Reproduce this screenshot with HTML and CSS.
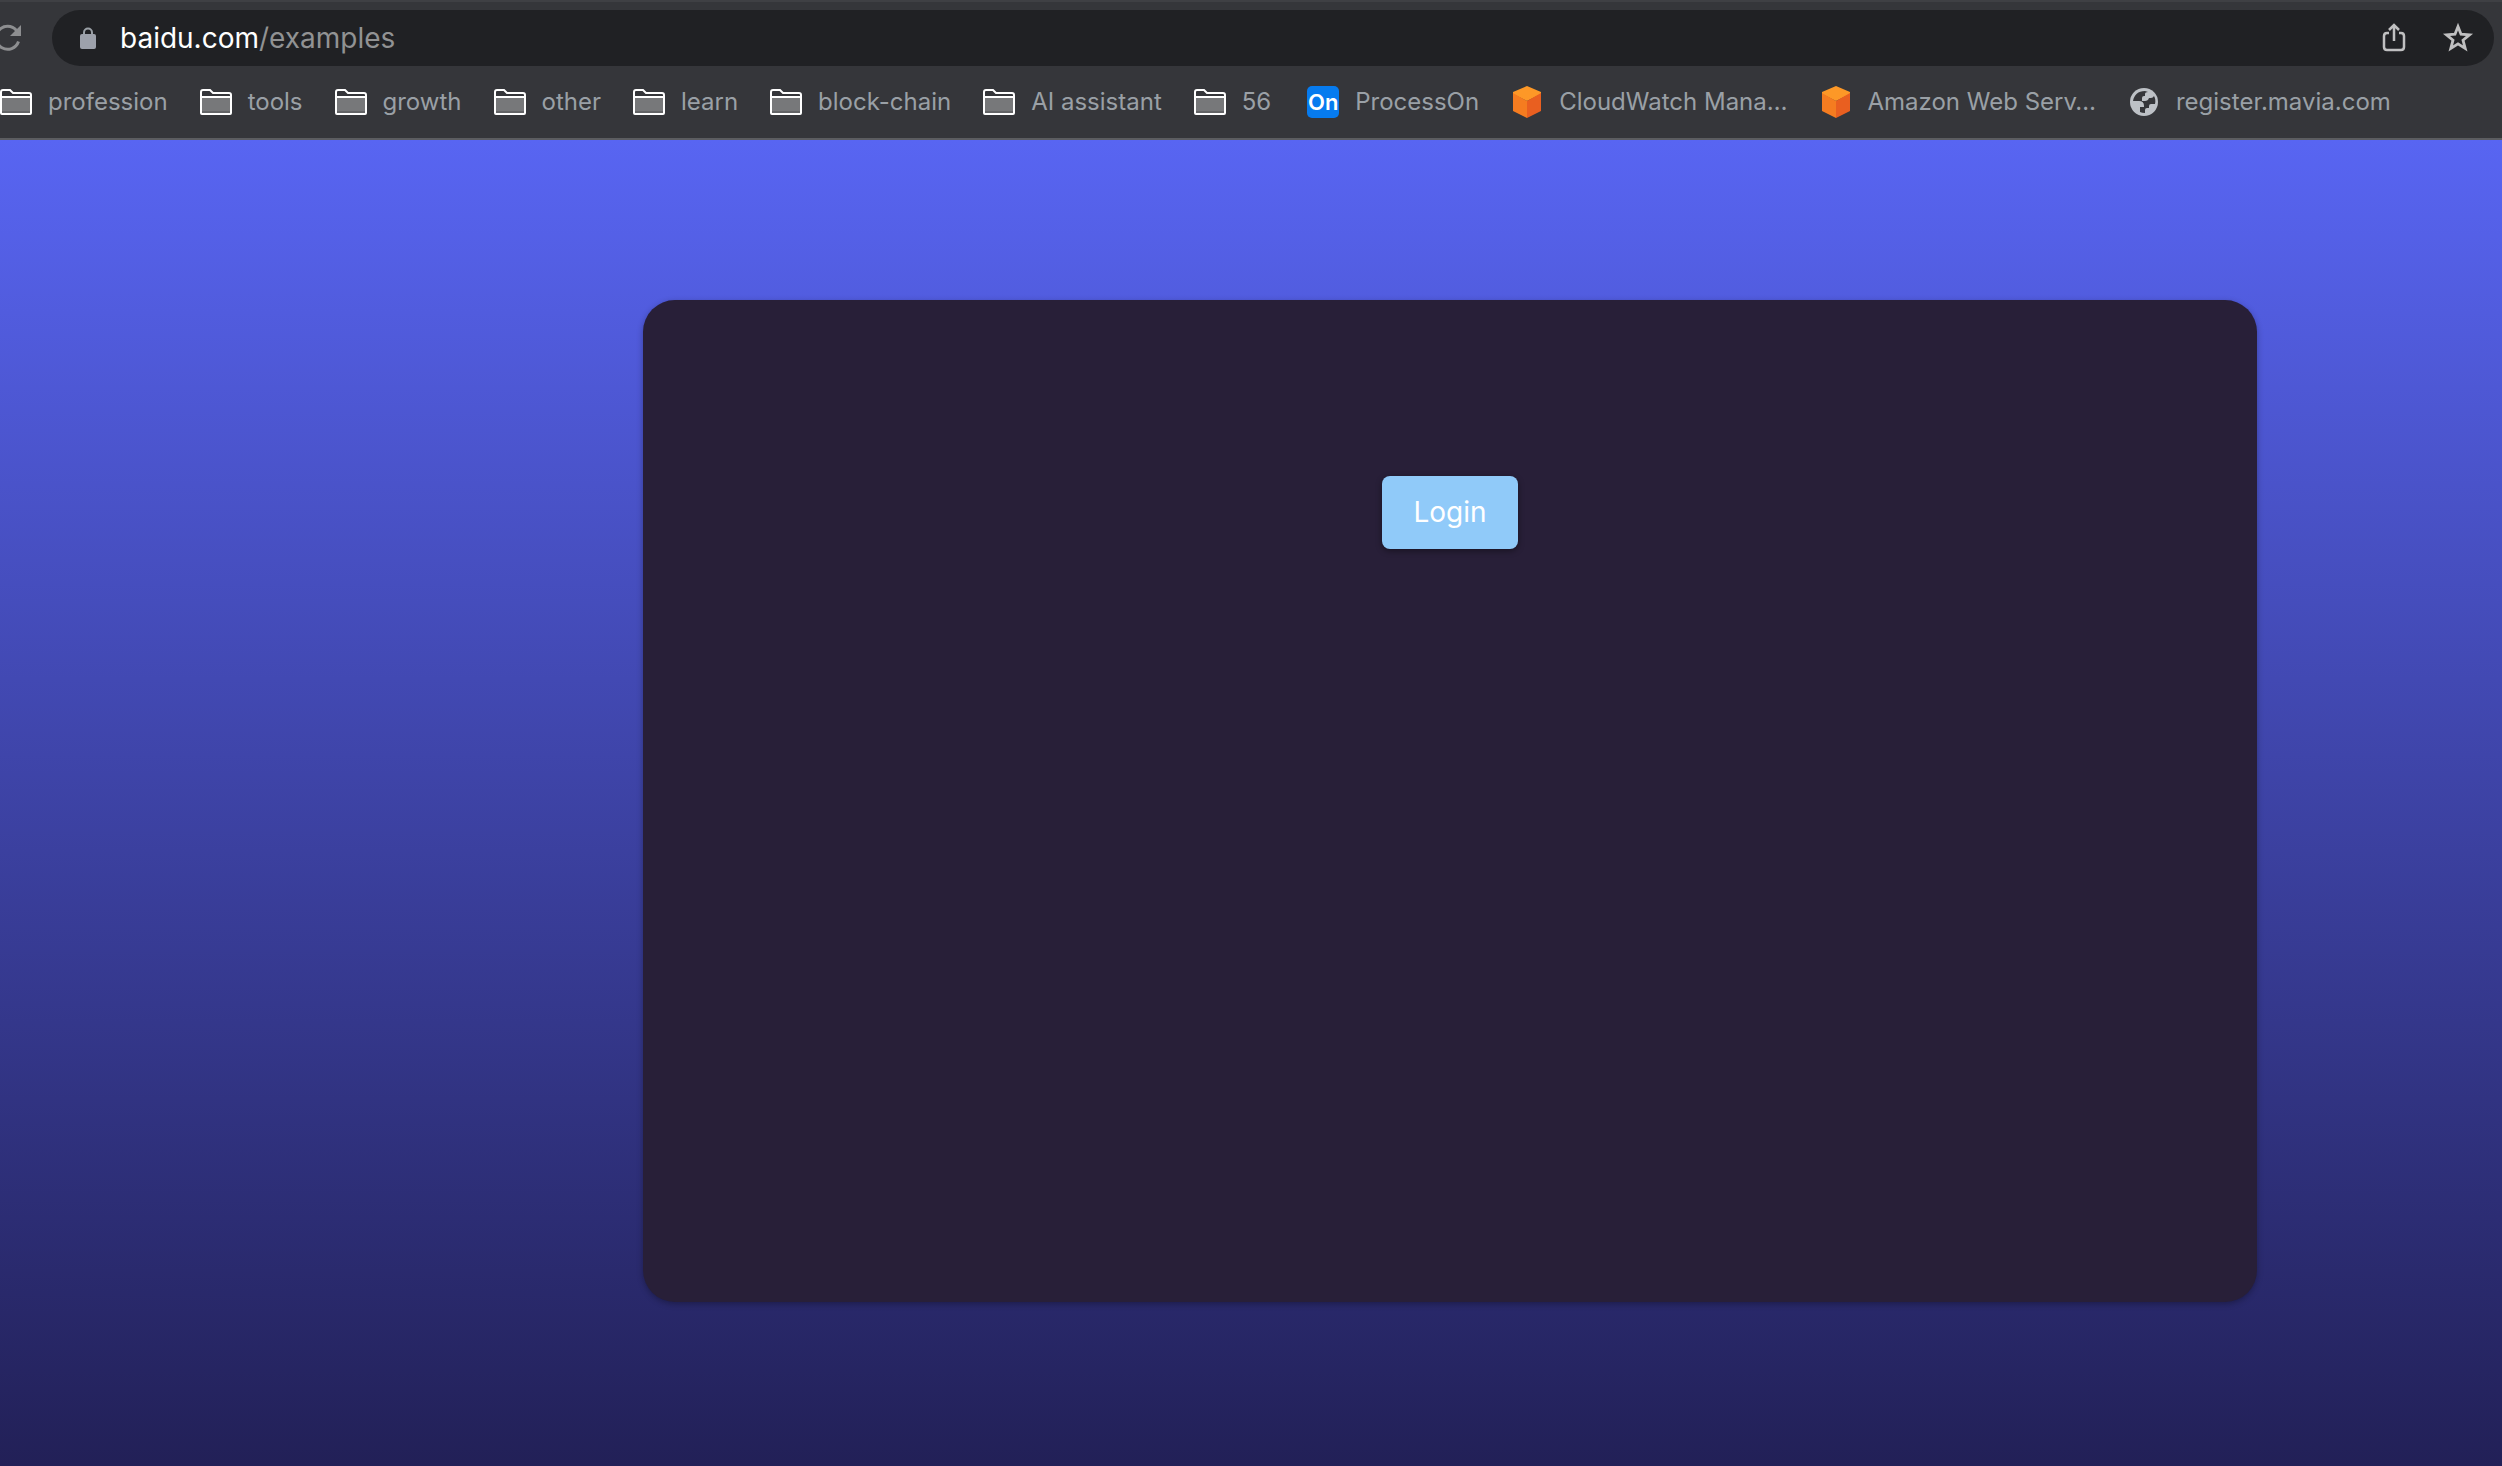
FILE: index.html
```html
<!DOCTYPE html>
<html lang="en">
<head>
<meta charset="utf-8">
<title>Examples</title>
<link rel="stylesheet" href="styles.css">
</head>
<body>
<svg class="sprite" aria-hidden="true">
  <symbol id="folder" viewBox="0 0 32 26">
    <path d="M2 9h28v15H2z" fill="#77787a"/>
    <path d="M2 22h28v2H2z" fill="#636466"/>
    <path d="M1 24V3q0-2 2-2h7l3 3h16q2 0 2 2v18q0 1-1 1H2q-1 0-1-1zM1 8h30" fill="none" stroke="#fff" stroke-width="2"/>
  </symbol>
  <symbol id="cube" viewBox="0 0 32 32">
    <path d="M16 0l14 6v2l-14 7L2 8V6z" fill="#fd9827"/>
    <path d="M2 7l14 8v17L2 25z" fill="#f57c20"/>
    <path d="M30 7l-14 8v17l14-7z" fill="#e95f20"/>
  </symbol>
</svg>
<header class="browser">
  <div class="toolbar">
    <button class="icon-button reload" aria-label="Reload">
      <svg width="32" height="32" viewBox="0 0 32 32"><path d="M26.500 19.500A11.500 11.500 0 1 1 24.500 8.500" fill="none" stroke="#8d8e90" stroke-width="3"/><path d="M29 3v11H18z" fill="#8d8e90"/></svg>
    </button>
    <div class="address">
      <svg width="16" height="22" viewBox="0 0 16 22"><path d="M4 9V5.500a4 4 0 0 1 8 0V9" fill="none" stroke="#9aa0a6" stroke-width="2"/><rect y="7" width="16" height="15" rx="2" fill="#9da1ab"/></svg>
      <p class="url"><span class="host">baidu.com</span>/examples</p>
      <button class="icon-button" aria-label="Share">
        <svg width="32" height="32" viewBox="0 0 32 32"><path d="M11 11H9q-3 0-3 3v11q0 3 3 3h14q3 0 3-3V14q0-3-3-3h-2M16 19V3M11 8l5-5 5 5" fill="none" stroke="#c0c0c1" stroke-width="2.500"/></svg>
      </button>
      <button class="icon-button" aria-label="Bookmark this page">
        <svg width="32" height="32" viewBox="0 0 32 32"><path d="M16 4.500l3 7.700 8.500.600-6.500 5.400 2.200 8.300-7.200-4.600-7.200 4.600 2.200-8.300-6.500-5.400 8.500-.600z" fill="none" stroke="#c0c0c1" stroke-width="2.800"/></svg>
      </button>
    </div>
  </div>
  <nav class="bookmarks" aria-label="Bookmarks">
    <div class="group">
      <a href="#"><svg class="folder"><use href="#folder"/></svg>profession</a>
      <a href="#"><svg class="folder"><use href="#folder"/></svg>tools</a>
      <a href="#"><svg class="folder"><use href="#folder"/></svg>growth</a>
      <a href="#"><svg class="folder"><use href="#folder"/></svg>other</a>
      <a href="#"><svg class="folder"><use href="#folder"/></svg>learn</a>
      <a href="#"><svg class="folder"><use href="#folder"/></svg>block-chain</a>
      <a href="#"><svg class="folder"><use href="#folder"/></svg>AI assistant</a>
      <a href="#"><svg class="folder"><use href="#folder"/></svg>56</a>
    </div>
    <div class="group">
      <a href="#"><span class="badge">On</span>ProcessOn</a>
      <a href="#"><svg class="favicon"><use href="#cube"/></svg>CloudWatch Mana…</a>
      <a href="#"><svg class="favicon"><use href="#cube"/></svg>Amazon Web Serv…</a>
      <a href="#"><svg class="favicon" viewBox="0 0 32 32"><circle cx="16" cy="16" r="14" fill="#bdc1c6"/><path d="M17 5C10 5 6 9 5 15h6q5 0 5 5v1h-4v5q2 1 5 1v-3q0-2 2-2h2v-2q0-2 2-2h4q1-5-1-8-1 2-3 2h-2q-1 3-4 3h-3v-3q0-2 2-2h1V8q0-2 3-2z" fill="#35363a"/></svg>register.mavia.com</a>
    </div>
  </nav>
</header>
<main class="page">
  <section class="card">
    <button class="login">Login</button>
  </section>
</main>
</body>
</html>
```

FILE: styles.css
```css
* {
  box-sizing: border-box;
}

body {
  display: flex;
  flex-direction: column;
  min-height: 100vh;
  margin: 0;
  font-family: Inter, "Liberation Sans", sans-serif;
}

.sprite {
  position: absolute;
  width: 0;
  height: 0;
}

.browser {
  background: #35363a;
  border-top: 2px solid #3f4044;
  border-bottom: 2px solid #5c5d60;
}

.toolbar {
  display: flex;
  align-items: center;
  gap: 28px;
  padding: 8px 8px 0 0;
}

.icon-button {
  display: flex;
  padding: 0;
  border: 0;
  background: none;
}

.reload {
  margin-left: -8px;
}

.address {
  display: flex;
  flex: 1;
  align-items: center;
  gap: 32px;
  height: 56px;
  padding: 0 20px 0 28px;
  border-radius: 28px;
  background: #202124;
}

.url {
  flex: 1;
  margin: 0 0 0 -8px;
  color: #919293;
  font-size: 28px;
  line-height: 32px;
}

.host {
  color: #fff;
}

.bookmarks {
  display: flex;
  gap: 36px;
  height: 72px;
  overflow: hidden;
}

.group {
  display: flex;
  gap: 32px;
}

.bookmarks a {
  display: flex;
  align-items: center;
  gap: 16px;
  color: #9aa0a6;
  font-size: 24px;
  line-height: 32px;
  text-decoration: none;
  white-space: nowrap;
}

.folder {
  width: 32px;
  height: 26px;
}

.favicon {
  width: 32px;
  height: 32px;
}

.badge {
  width: 32px;
  border-radius: 5px;
  background: #067bef;
  color: #fff;
  font-size: 22px;
  font-weight: 600;
  text-align: center;
}

.page {
  display: flex;
  flex: 1;
  padding: 160px 245px 164px 643px;
  background: linear-gradient(#5865f2, #222057);
}

.card {
  flex: 1;
  padding-top: 176px;
  border-radius: 32px;
  background: #281f38;
  box-shadow: 0 2px 6px rgba(0, 0, 0, 0.3);
  text-align: center;
}

.login {
  padding: 20px 31px;
  border: 0;
  border-radius: 8px;
  background: #90caf9;
  box-shadow: 0 2px 6px rgba(0, 0, 0, 0.4);
  color: #fff;
  font-family: Inter, "Liberation Sans", sans-serif;
  font-size: 28px;
  line-height: 33px;
}
```
